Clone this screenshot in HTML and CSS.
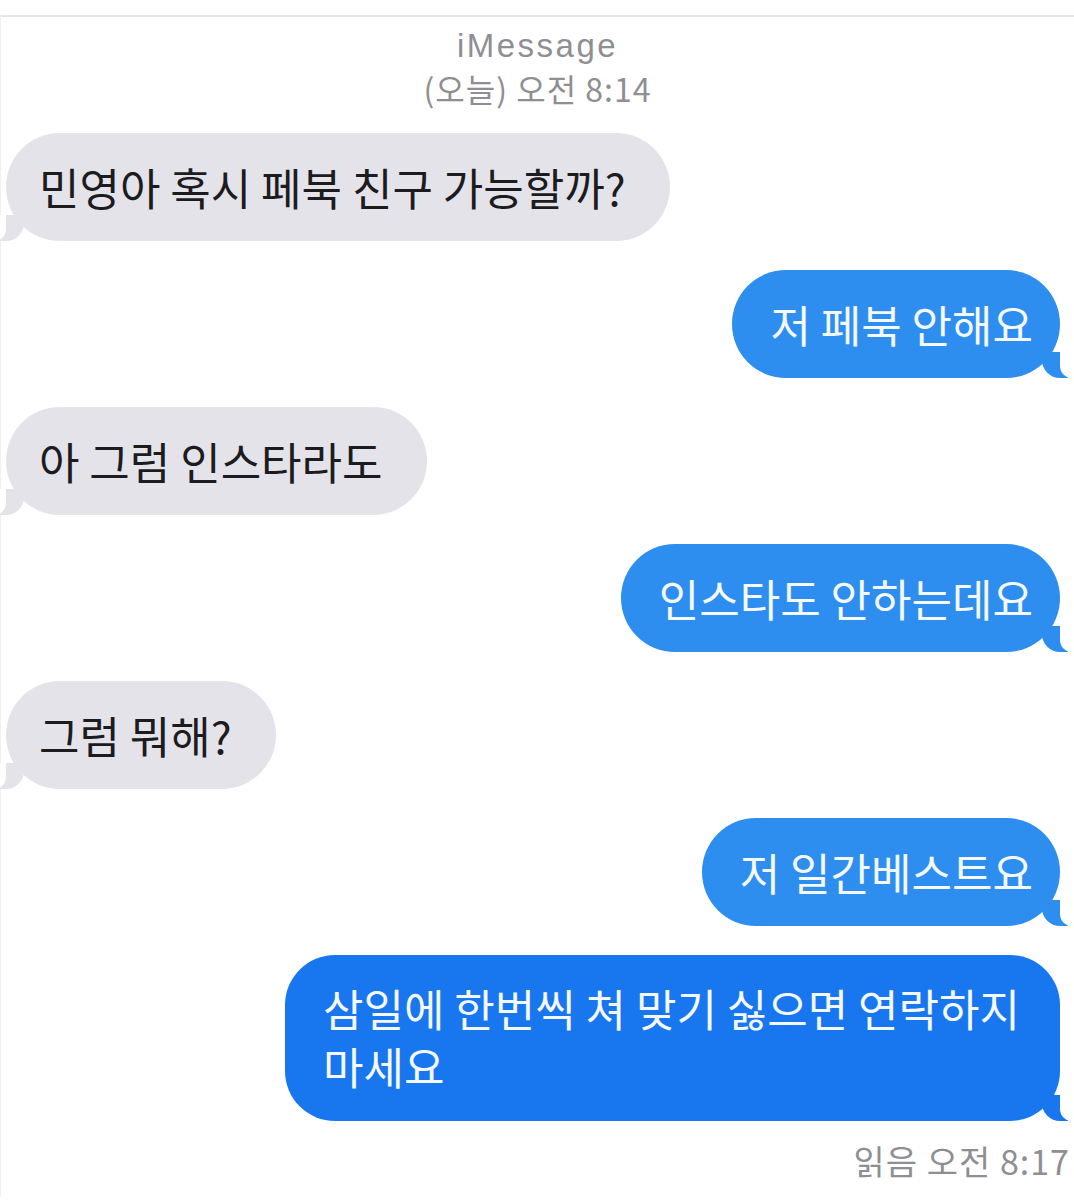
FILE: index.html
```html
<!DOCTYPE html>
<html>
<head>
    <title>iMessage</title>
    <link rel="stylesheet" href="styles.css">
</head>
<body>
    <div class="screen">
        <div class="header">
            <div class="service">iMessage</div>
            <div class="stamp">(오늘) 오전 8:14</div>
        </div>

        <div class="thread">
            <div class="row in"><div class="bubble">민영아 혹시 페북 친구 가능할까?</div></div>
            <div class="row out"><div class="bubble">저 페북 안해요</div></div>
            <div class="row in"><div class="bubble">아 그럼 인스타라도</div></div>
            <div class="row out"><div class="bubble">인스타도 안하는데요</div></div>
            <div class="row in"><div class="bubble">그럼 뭐해?</div></div>
            <div class="row out"><div class="bubble">저 일간베스트요</div></div>
            <div class="row out">
                <div class="bubble last">
                    <div class="line">삼일에 한번씩 쳐 맞기 싫으면 연락하지</div>
                    <div class="line">마세요</div>
                </div>
            </div>
        </div>

        <div class="receipt">읽음 오전 8:17</div>
    </div>
</body>
</html>
```

FILE: styles.css
```css
body { margin: 0; background: #fff; font-family: "Noto Sans CJK KR", "Noto Sans", sans-serif; }
.screen { margin-top: 15px; border-top: 2px solid #e4e4e6; border-left: 1px solid #f0f0f2; min-height: 1180px; }
.header { text-align: center; color: #8e8e93; padding-top: 11px; }
.service { font-family: "Liberation Sans", Arial, sans-serif; font-size: 33px; line-height: 36px; letter-spacing: 2.5px; }
.stamp { font-size: 32px; line-height: 46px; letter-spacing: 1px; padding-top: 1px; }
.thread { display: flex; flex-direction: column; gap: 29px; margin-top: 22px; }
.row { display: flex; }
.row.in { justify-content: flex-start; padding-left: 5px; }
.row.out { justify-content: flex-end; padding-right: 14px; }
.bubble { position: relative; font-size: 44px; line-height: 52px; padding: 28px 44px 28px 33px; border-radius: 54px; }
.in .bubble { background: #e5e3ea; color: #1c1c1e; }
.out .bubble { background: #2d8ef0; color: #f4f8ff; padding: 28px 27px 28px 38px; }
.out .bubble.last { background: #1876ef; line-height: 58px; padding: 24px 40px 26px 38px; border-radius: 50px; }

/* tails */
.bubble::before, .bubble::after { content: ""; position: absolute; bottom: 0; height: 26px; }
.in .bubble::before { left: -8px; width: 26px; background: #e5e3ea; border-bottom-right-radius: 18px; }
.in .bubble::after { left: -14px; width: 14px; background: #fff; border-bottom-right-radius: 12px; }
.out .bubble::before { right: -8px; width: 26px; background: #2d8ef0; border-bottom-left-radius: 18px; }
.out .bubble.last::before { background: #1876ef; }
.out .bubble::after { right: -14px; width: 14px; background: #fff; border-bottom-left-radius: 12px; }

.receipt { text-align: right; color: #8e8e93; font-size: 34px; line-height: 40px; padding: 20px 4px 0 0; letter-spacing: 1px; }
```
